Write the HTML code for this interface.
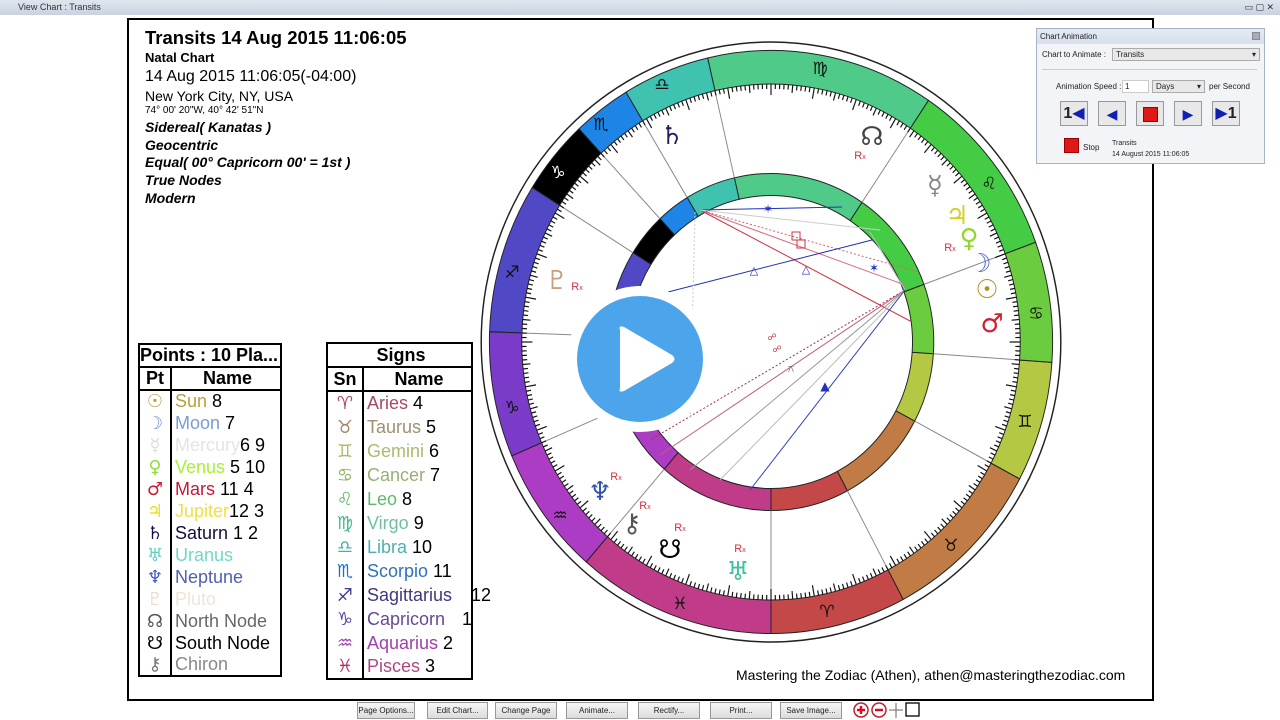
<!DOCTYPE html>
<html><head><meta charset="utf-8">
<style>
*{margin:0;padding:0;box-sizing:border-box}
body{width:1280px;height:720px;overflow:hidden;background:#fff;position:relative;font-family:"Liberation Sans","DejaVu Sans",sans-serif}
.tb{position:absolute;left:0;top:0;width:1280px;height:15px;background:linear-gradient(#dfe6ef,#c9d3df);font-size:9px;color:#333;line-height:15px;padding-left:18px}
.frame{position:absolute;left:127px;top:18px;width:1027px;height:683px;border:2px solid #000}
.a{position:absolute;white-space:nowrap;color:#000}
.g{font-family:"DejaVu Sans",sans-serif}
table{border-collapse:collapse;position:absolute;font-size:18px}
td{border-left:2px solid #000;border-right:2px solid #000;padding:0 0 0 3px;height:22px;line-height:21px}
.btn{position:absolute;top:702px;height:17px;border:1px solid #999;background:linear-gradient(#f6f6f6,#dcdcdc);font-size:8px;text-align:center;line-height:15px;color:#222}
</style></head><body>
<div class="tb">View Chart : Transits<span style="position:absolute;right:6px;top:0;font-size:9px">▭ ▢ ✕</span></div>
<div class="frame"></div>

<div class="a" style="left:145px;top:27px;font-size:18.5px;font-weight:bold">Transits 14 Aug 2015 11:06:05</div>
<div class="a" style="left:145px;top:50px;font-size:13px;font-weight:bold">Natal Chart</div>
<div class="a" style="left:145px;top:68px;font-size:16px">14 Aug 2015 11:06:05(-04:00)</div>
<div class="a" style="left:145px;top:88px;font-size:14px">New York City, NY, USA</div>
<div class="a" style="left:145px;top:105px;font-size:10px">74° 00' 20"W, 40° 42' 51"N</div>
<div class="a" style="left:145px;top:119px;font-size:14px;font-weight:bold;font-style:italic;line-height:17.7px">Sidereal( Kanatas )<br>Geocentric<br>Equal( 00° Capricorn 00' = 1st )<br>True Nodes<br>Modern</div>

<table style="left:138px;top:343px;width:144px;border:2px solid #000">
<tr><td colspan="2" style="font-weight:bold;border-bottom:2px solid #000;padding:0">Points : 10 Pla...</td></tr>
<tr style="font-weight:bold"><td style="width:32px;text-align:center;padding:0;border-bottom:2px solid #000">Pt</td><td style="text-align:center;border-bottom:2px solid #000">Name</td></tr>
<tr><td class="g" style="color:#b8a040;text-align:center;padding:0">☉</td><td><span style="color:#b8a040">Sun</span> 8</td></tr>
<tr><td class="g" style="color:#6b8fe0;text-align:center;padding:0">☽</td><td><span style="color:#7a9ad8">Moon</span> 7</td></tr>
<tr><td class="g" style="color:#ddd;text-align:center;padding:0">☿</td><td><span style="color:#e4e4e4">Mercury</span>6 9</td></tr>
<tr><td class="g" style="color:#8ee03c;text-align:center;padding:0">♀</td><td><span style="color:#a8f030">Venus</span> 5 10</td></tr>
<tr><td class="g" style="color:#d01830;text-align:center;padding:0">♂</td><td><span style="color:#c81838">Mars</span> 11 4</td></tr>
<tr><td class="g" style="color:#e8e020;text-align:center;padding:0">♃</td><td><span style="color:#f0e040">Jupiter</span>12 3</td></tr>
<tr><td class="g" style="color:#101050;text-align:center;padding:0">♄</td><td><span style="color:#101040">Saturn</span> 1 2</td></tr>
<tr><td class="g" style="color:#60d0c0;text-align:center;padding:0">♅</td><td><span style="color:#70d8c8">Uranus</span></td></tr>
<tr><td class="g" style="color:#4058c0;text-align:center;padding:0">♆</td><td><span style="color:#5060b0">Neptune</span></td></tr>
<tr><td class="g" style="color:#eadccc;text-align:center;padding:0">♇</td><td><span style="color:#f0e4d8">Pluto</span></td></tr>
<tr><td class="g" style="color:#555;text-align:center;padding:0">☊</td><td><span style="color:#666">North Node</span></td></tr>
<tr><td class="g" style="color:#000;text-align:center;padding:0">☋</td><td>South Node</td></tr>
<tr><td class="g" style="color:#777;text-align:center;padding:0">⚷</td><td><span style="color:#888">Chiron</span></td></tr>
</table>

<table style="left:326px;top:342px;width:147px;border:2px solid #000">
<tr><td colspan="2" style="font-weight:bold;border-bottom:2px solid #000;text-align:center;height:24px">Signs</td></tr>
<tr style="font-weight:bold"><td style="width:36px;text-align:center;padding:0;border-bottom:2px solid #000;height:24px">Sn</td><td style="text-align:center;border-bottom:2px solid #000">Name</td></tr>
<tr><td class="g" style="color:#b04860;text-align:center;padding:0;height:24px">♈&#xFE0E;</td><td><span style="color:#a84868">Aries</span> 4</td></tr>
<tr><td class="g" style="color:#a08868;text-align:center;padding:0;height:24px">♉&#xFE0E;</td><td><span style="color:#a09070">Taurus</span> 5</td></tr>
<tr><td class="g" style="color:#b0b868;text-align:center;padding:0;height:24px">♊&#xFE0E;</td><td><span style="color:#b0b870">Gemini</span> 6</td></tr>
<tr><td class="g" style="color:#90b060;text-align:center;padding:0;height:24px">♋&#xFE0E;</td><td><span style="color:#98b070">Cancer</span> 7</td></tr>
<tr><td class="g" style="color:#60b860;text-align:center;padding:0;height:24px">♌&#xFE0E;</td><td><span style="color:#60b870">Leo</span> 8</td></tr>
<tr><td class="g" style="color:#40b890;text-align:center;padding:0;height:24px">♍&#xFE0E;</td><td><span style="color:#70c0a0">Virgo</span> 9</td></tr>
<tr><td class="g" style="color:#40b0b0;text-align:center;padding:0;height:24px">♎&#xFE0E;</td><td><span style="color:#50b0b0">Libra</span> 10</td></tr>
<tr><td class="g" style="color:#2070c0;text-align:center;padding:0;height:24px">♏&#xFE0E;</td><td><span style="color:#3070c0">Scorpio</span> 11</td></tr>
<tr><td class="g" style="color:#403890;text-align:center;padding:0;height:24px">♐&#xFE0E;</td><td><span style="color:#403880">Sagittarius</span> <span style="position:absolute;left:470px;margin-left:-326px">12</span></td></tr>
<tr><td class="g" style="color:#6040a0;text-align:center;padding:0;height:24px">♑&#xFE0E;</td><td><span style="color:#6a4898">Capricorn</span> <span style="position:absolute;left:135px">1</span></td></tr>
<tr><td class="g" style="color:#a040b0;text-align:center;padding:0;height:24px">♒&#xFE0E;</td><td><span style="color:#a040a8">Aquarius</span> 2</td></tr>
<tr><td class="g" style="color:#b03870;text-align:center;padding:0;height:24px">♓&#xFE0E;</td><td><span style="color:#b04880">Pisces</span> 3</td></tr>
</table>

<svg id="ch" width="1280" height="720" style="position:absolute;left:0;top:0" xmlns="http://www.w3.org/2000/svg">
<g id="w" transform="translate(771,342) scale(0.966,1)"></g>
<g id="asp" fill="none" stroke-width="1">
<line x1="700" y1="210" x2="842" y2="207" stroke="#2030c0"/>
<line x1="700" y1="210" x2="918" y2="272" stroke="#e06070" stroke-dasharray="2,2"/>
<line x1="700" y1="210" x2="912" y2="322" stroke="#d03040"/>
<line x1="700" y1="210" x2="905" y2="285" stroke="#d07080"/>
<line x1="668" y1="292" x2="872" y2="240" stroke="#2030b0"/>
<line x1="905" y1="290" x2="650" y2="440" stroke="#a03050" stroke-dasharray="2,2"/>
<line x1="905" y1="290" x2="660" y2="455" stroke="#c06070"/>
<line x1="905" y1="290" x2="690" y2="470" stroke="#999"/>
<line x1="905" y1="290" x2="720" y2="480" stroke="#bbb"/>
<line x1="905" y1="290" x2="750" y2="490" stroke="#3040c0"/>
<line x1="880" y1="230" x2="700" y2="210" stroke="#ccc"/>
<line x1="695" y1="212" x2="690" y2="420" stroke="#ccc" stroke-dasharray="2,2"/>
<line x1="870" y1="232" x2="905" y2="290" stroke="#bbb"/>
</g>
<g class="g" font-family="DejaVu Sans" text-anchor="middle">
<text x="768" y="213" font-size="12" fill="#2030c0">✶</text>
<text x="874" y="272" font-size="12" fill="#2030c0">✶</text>
<rect x="792" y="232" width="8" height="8" fill="none" stroke="#d03040"/>
<rect x="797" y="240" width="8" height="8" fill="none" stroke="#d03040"/>
<text x="754" y="274" font-size="11" fill="#2030c0">△</text>
<text x="806" y="273" font-size="11" fill="#2030c0">△</text>
<text x="825" y="390" font-size="12" fill="#2030c0">▲</text>
<text x="772" y="340" font-size="9" fill="#c03040">☍</text>
<text x="777" y="352" font-size="9" fill="#c03040">☍</text>
<text x="791" y="372" font-size="10" fill="#666">⚻</text>

<g font-size="17" fill="#111" font-weight="bold">
<text x="820" y="74">♍&#xFE0E;</text>
<text x="662" y="90">♎&#xFE0E;</text>
<text x="601" y="130">♏&#xFE0E;</text>
<text x="558" y="178" fill="#fff">♑&#xFE0E;</text>
<text x="512" y="278">♐&#xFE0E;</text>
<text x="512" y="413">♑&#xFE0E;</text>
<text x="560" y="521">♒&#xFE0E;</text>
<text x="680" y="609">♓&#xFE0E;</text>
<text x="827" y="617">♈&#xFE0E;</text>
<text x="951" y="551">♉&#xFE0E;</text>
<text x="1025" y="427">♊&#xFE0E;</text>
<text x="1036" y="319">♋&#xFE0E;</text>
<text x="989" y="189">♌&#xFE0E;</text>
</g>
<g font-size="26" font-weight="bold">
<text x="672" y="144" fill="#202060">♄</text>
<text x="872" y="145" fill="#444">☊</text>
<text x="935" y="194" fill="#888">☿</text>
<text x="957" y="224" fill="#d8d020">♃</text>
<text x="969" y="247" fill="#90d830">♀</text>
<text x="980" y="272" fill="#5070d0">☽</text>
<text x="987" y="298" fill="#b09020">☉</text>
<text x="992" y="332" fill="#d02030">♂</text>
<text x="557" y="289" fill="#c8a080">♇</text>
<text x="600" y="500" fill="#3050b0">♆</text>
<text x="632" y="532" fill="#555">⚷</text>
<text x="670" y="558" fill="#000">☋</text>
<text x="738" y="580" fill="#40c0a0">♅</text>
</g>
<g font-size="11" fill="#d03040" font-family="Liberation Sans">
<text x="860" y="159">R<tspan font-size="7">x</tspan></text>
<text x="950" y="251">R<tspan font-size="7">x</tspan></text>
<text x="577" y="290">R<tspan font-size="7">x</tspan></text>
<text x="616" y="480">R<tspan font-size="7">x</tspan></text>
<text x="645" y="509">R<tspan font-size="7">x</tspan></text>
<text x="680" y="531">R<tspan font-size="7">x</tspan></text>
<text x="740" y="552">R<tspan font-size="7">x</tspan></text>
</g>
</g>
<circle cx="640" cy="359" r="73" fill="#fff"/>
<circle cx="640" cy="359" r="63" fill="#4ca5ea"/>
<path d="M620 330 Q618 325 624 327 L672 355 Q677 359 672 363 L624 391 Q618 393 620 388 Z" fill="#fff"/>
</svg>

<div class="a" style="left:736px;top:667px;font-size:14px">Mastering the Zodiac (Athen), athen@masteringthezodiac.com</div>

<div style="position:absolute;left:1036px;top:28px;width:229px;height:136px;background:#f2f4f7;border:1px solid #a8b4c4;font-size:8px;color:#222">
<div style="height:15px;background:linear-gradient(#e4ebf4,#d6dfea);line-height:15px;padding-left:3px;font-size:8px">Chart Animation<span style="position:absolute;right:4px;top:3px;width:8px;height:8px;background:#aab;border:1px solid #889"></span></div>
<div style="position:absolute;left:5px;top:21px">Chart to Animate :</div>
<div style="position:absolute;left:75px;top:19px;width:148px;height:13px;border:1px solid #aaa;background:#e8e8e8;padding-left:3px;line-height:12px">Transits<span style="position:absolute;right:3px">▾</span></div>
<div style="position:absolute;left:5px;top:40px;width:215px;border-top:1px solid #ccc"></div>
<div style="position:absolute;left:19px;top:53px">Animation Speed :</div>
<div style="position:absolute;left:85px;top:51px;width:27px;height:13px;background:#fff;border:1px solid #ccc;padding-left:2px;line-height:12px">1</div>
<div style="position:absolute;left:115px;top:51px;width:53px;height:13px;border:1px solid #aaa;background:#e8e8e8;padding-left:3px;line-height:12px">Days<span style="position:absolute;right:3px">▾</span></div>
<div style="position:absolute;left:172px;top:53px">per Second</div>
<div style="position:absolute;left:23px;top:72px;width:28px;height:25px;border:1px solid #999;background:#e8e8e8;font-size:16px;font-weight:bold;text-align:center;line-height:24px">1<span style="color:#1020b0">◀</span></div>
<div style="position:absolute;left:61px;top:72px;width:28px;height:25px;border:1px solid #999;background:#e8e8e8;color:#1020b0;font-size:14px;text-align:center;line-height:24px">◀</div>
<div style="position:absolute;left:99px;top:72px;width:28px;height:25px;border:1px solid #999;background:#e8e8e8"><div style="margin:5px auto;width:15px;height:15px;background:#e01818;border:1px solid #900"></div></div>
<div style="position:absolute;left:137px;top:72px;width:28px;height:25px;border:1px solid #999;background:#e8e8e8;color:#1020b0;font-size:14px;text-align:center;line-height:24px">▶</div>
<div style="position:absolute;left:175px;top:72px;width:28px;height:25px;border:1px solid #999;background:#e8e8e8;font-size:16px;font-weight:bold;text-align:center;line-height:24px"><span style="color:#1020b0">▶</span>1</div>
<div style="position:absolute;left:27px;top:109px;width:15px;height:15px;background:#e01818;border:1px solid #900"></div>
<div style="position:absolute;left:46px;top:114px">Stop</div>
<div style="position:absolute;left:75px;top:109px;line-height:11px;font-size:7px">Transits<br>14 August 2015 11:06:05</div>
</div>

<div class="btn" style="left:357px;width:58px">Page Options...</div>
<div class="btn" style="left:427px;width:61px">Edit Chart...</div>
<div class="btn" style="left:495px;width:62px">Change Page</div>
<div class="btn" style="left:566px;width:62px">Animate...</div>
<div class="btn" style="left:638px;width:62px">Rectify...</div>
<div class="btn" style="left:710px;width:62px">Print...</div>
<div class="btn" style="left:780px;width:62px">Save Image...</div>
<svg style="position:absolute;left:852px;top:701px" width="70" height="19">
<circle cx="9" cy="9" r="7" fill="#fff" stroke="#c02030" stroke-width="1.5"/><path d="M5 9h8M9 5v8" stroke="#d01020" stroke-width="2.5"/>
<circle cx="27" cy="9" r="7" fill="#fff" stroke="#c02030" stroke-width="1.5"/><path d="M23 9h8" stroke="#d01020" stroke-width="2.5"/>
<path d="M44 2v15M37 9h14" stroke="#666" stroke-width="1"/>
<rect x="54" y="2" width="13" height="13" fill="#fff" stroke="#000" stroke-width="1.3"/>
</svg>

<script>
(function(){
var NS="http://www.w3.org/2000/svg",g=document.getElementById('w');
function P(a,r){var t=a*Math.PI/180;return [r*Math.cos(t),-r*Math.sin(t)];}
function ring(a1,a2,r1,r2,fill){var p1=P(a1,r2),p2=P(a2,r2),p3=P(a2,r1),p4=P(a1,r1);var la=((a2-a1+360)%360)>180?1:0;
var d="M"+p1+"A"+r2+","+r2+" 0 "+la+" 0 "+p2+"L"+p3+"A"+r1+","+r1+" 0 "+la+" 1 "+p4+"Z";
var e=document.createElementNS(NS,'path');e.setAttribute('d',d);e.setAttribute('fill',fill);e.setAttribute('stroke','#222');e.setAttribute('stroke-width','1');g.appendChild(e);}
function el(n,at){var e=document.createElementNS(NS,n);for(var k in at)e.setAttribute(k,at[k]);g.appendChild(e);return e;}
el('circle',{r:300,fill:'none',stroke:'#222','stroke-width':1.5});
var b=[20,56,103,121,133,148,178,203,229,270,298,332,356];
var c=['#45cc45','#4fca88','#3fc2b0','#1e84e6','#000','#5048c4','#7a3cc8','#ac3cc4','#c03c88','#c44848','#c07c44','#b4c844','#6ccc40'];
for(var i=0;i<13;i++){var a1=b[i],a2=(i==12?b[0]+360:b[i+1]);ring(a1,a2,258,291.5,c[i]);ring(a1,a2,146.5,168.5,c[i]);
var p=P(a1,168.5),q=P(a1,258);el('line',{x1:p[0],y1:p[1],x2:q[0],y2:q[1],stroke:'#888','stroke-width':1});}
for(var d=0;d<360;d++){var L=d%10==0?11:(d%5==0?8:5);var p=P(d,258),q=P(d,258-L);el('line',{x1:p[0],y1:p[1],x2:q[0],y2:q[1],stroke:'#111','stroke-width':1.2});}
})();
</script>
</body></html>
